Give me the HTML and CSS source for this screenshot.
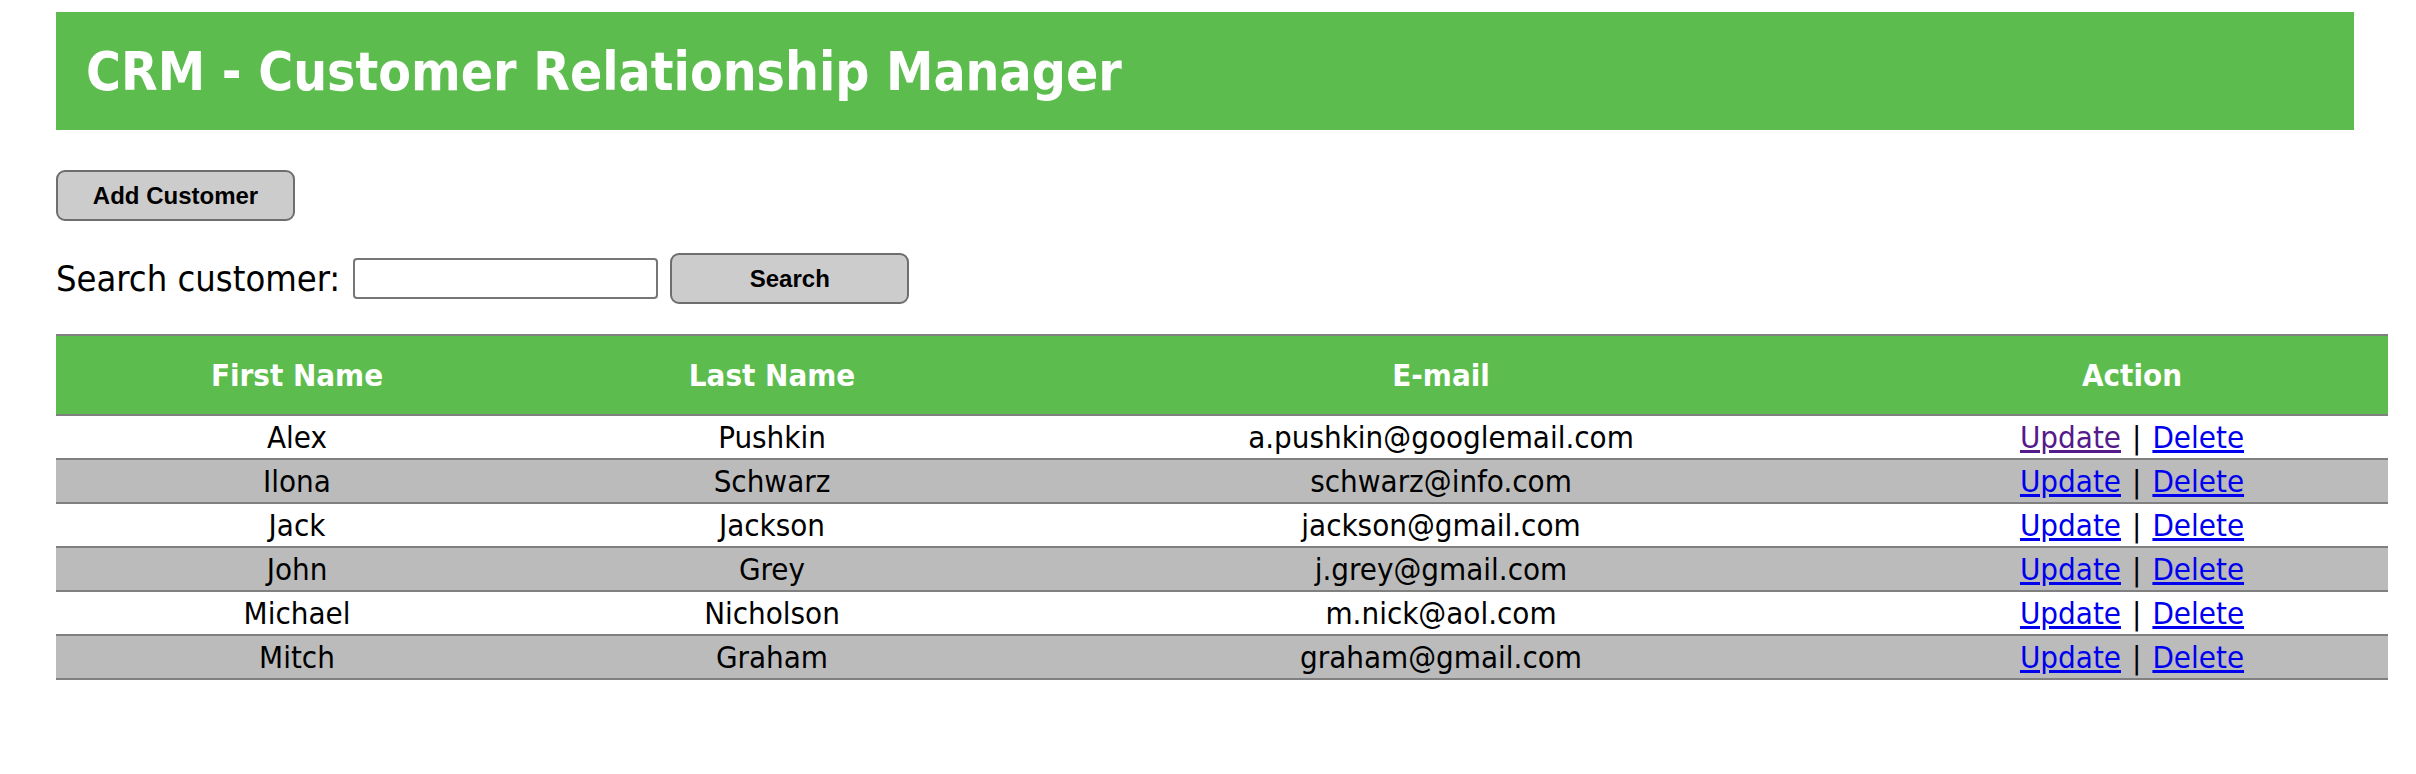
FILE: index.html
```html
<!DOCTYPE html>
<html lang="en">
<head>
<meta charset="utf-8">
<title>CRM - Customer Relationship Manager</title>
<link rel="stylesheet" href="styles.css">
</head>
<body>
<div class="page">
  <header class="banner">
    <h1 class="title">CRM - Customer Relationship Manager</h1>
  </header>

  <div class="toolbar">
    <button type="button" class="btn">Add Customer</button>
  </div>

  <form class="search">
    <label class="search-label" for="q">Search customer:</label>
    <input class="search-input" id="q" type="text">
    <button type="button" class="btn">Search</button>
  </form>

  <table class="customers">
    <colgroup>
      <col class="col-first">
      <col class="col-last">
      <col class="col-email">
      <col class="col-action">
    </colgroup>
    <thead>
      <tr><th>First Name</th><th>Last Name</th><th>E-mail</th><th>Action</th></tr>
    </thead>
    <tbody>
      <tr><td>Alex</td><td>Pushkin</td><td>a.pushkin@googlemail.com</td><td><a class="link visited" href="#u1">Update</a><span class="sep">|</span><a class="link" href="#d1">Delete</a></td></tr>
      <tr><td>Ilona</td><td>Schwarz</td><td>schwarz@info.com</td><td><a class="link" href="#u2">Update</a><span class="sep">|</span><a class="link" href="#d2">Delete</a></td></tr>
      <tr><td>Jack</td><td>Jackson</td><td>jackson@gmail.com</td><td><a class="link" href="#u3">Update</a><span class="sep">|</span><a class="link" href="#d3">Delete</a></td></tr>
      <tr><td>John</td><td>Grey</td><td>j.grey@gmail.com</td><td><a class="link" href="#u4">Update</a><span class="sep">|</span><a class="link" href="#d4">Delete</a></td></tr>
      <tr><td>Michael</td><td>Nicholson</td><td>m.nick@aol.com</td><td><a class="link" href="#u5">Update</a><span class="sep">|</span><a class="link" href="#d5">Delete</a></td></tr>
      <tr><td>Mitch</td><td>Graham</td><td>graham@gmail.com</td><td><a class="link" href="#u6">Update</a><span class="sep">|</span><a class="link" href="#d6">Delete</a></td></tr>
    </tbody>
  </table>
</div>
</body>
</html>
```
FILE: styles.css
```css
html, body {
  margin: 0;
  padding: 0;
  background: #ffffff;
}

body {
  font-family: "DejaVu Sans Condensed", "DejaVu Sans", sans-serif;
  font-stretch: condensed;
  color: #000000;
}

.page {
  padding: 12px 0 40px 56px;
}

.banner {
  width: 2298px;
  height: 118px;
  background: #5cbd4e;
  display: flex;
  align-items: center;
  padding-left: 30px;
  box-sizing: border-box;
}

.title {
  margin: 0;
  font-size: 53px;
  font-weight: bold;
  color: #ffffff;
  line-height: 1;
}

.toolbar {
  margin-top: 40px;
  display: flex;
}

.btn {
  width: 239px;
  height: 51px;
  box-sizing: border-box;
  background: #cccccc;
  border: 2px solid #6e6e6e;
  border-radius: 9px;
  font-family: "Liberation Sans", Arial, sans-serif;
  font-weight: bold;
  font-size: 24px;
  color: #000000;
  padding: 0;
}

.search {
  margin: 32px 0 0 0;
  display: flex;
  align-items: center;
  height: 51px;
}

.search-label {
  font-size: 36px;
  margin-right: 13px;
}

.search-input {
  width: 305px;
  height: 41px;
  box-sizing: border-box;
  border: 2px solid #767676;
  border-radius: 4px;
  margin: 0 12px 0 0;
  padding: 0 4px;
}

.customers {
  margin-top: 30px;
  width: 2332px;
  table-layout: fixed;
  border-collapse: separate;
  border-spacing: 0;
  font-size: 31px;
}

.col-first { width: 482px; }
.col-last { width: 468px; }
.col-email { width: 870px; }
.col-action { width: 512px; }

.customers th {
  height: 78px;
  padding: 0;
  background: #5cbd4e;
  color: #ffffff;
  font-weight: bold;
  border-top: 2px solid #808080;
  border-bottom: 2px solid #808080;
  text-align: center;
  vertical-align: middle;
}

.customers td {
  height: 42px;
  padding: 0;
  line-height: 42px;
  border-bottom: 2px solid #808080;
  text-align: center;
  vertical-align: middle;
}

.customers tbody tr:nth-child(even) td {
  background: #bbbbbb;
}

.link {
  color: #0000ee;
  text-decoration: underline;
}

.link.visited {
  color: #551a8b;
}

.sep {
  margin: 0 11px;
}
```
